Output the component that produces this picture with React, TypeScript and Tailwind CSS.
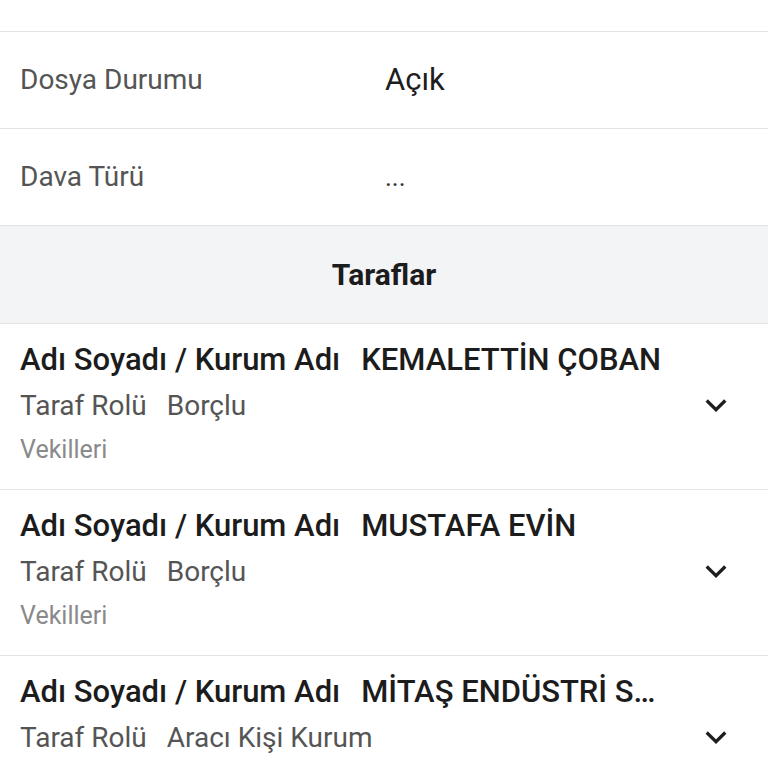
import React from "react";

function Chevron() {
  return (
    <svg width="30" height="30" viewBox="0 0 24 24" fill="none" stroke="#1e1e1e" strokeWidth="2.6" strokeLinecap="square">
      <path d="M5.5 8.5 L12 15 L18.5 8.5" />
    </svg>
  );
}

function InfoRow({ label, value, small }: { label: string; value: string; small?: boolean }) {
  return (
    <div className="flex h-[97px] items-center border-b border-[#e3e3e3] bg-white px-5">
      <div className="w-[365px] text-[28px] leading-[36px] text-[#555]">{label}</div>
      <div className={small ? "text-[26px] text-[#333]" : "text-[31px] leading-[36px] text-[#1e1e1e]"}>{value}</div>
    </div>
  );
}

function Party({ name, role, vekil = true }: { name: string; role: string; vekil?: boolean }) {
  return (
    <div className="flex h-[166px] items-start border-b border-[#e3e3e3] bg-white pl-5 pt-[18px]">
      <div className="flex w-[645px] flex-col">
        <div className="flex items-baseline whitespace-nowrap text-[31px] font-medium leading-[36px] text-[#1c1c1c]">
          <span className="shrink-0">Adı Soyadı / Kurum Adı</span>
          <span className="ml-[21px] min-w-0 truncate">{name}</span>
        </div>
        <div className="mt-[10px] flex items-baseline text-[28px] leading-[36px] text-[#555]">
          <span>Taraf Rolü</span>
          <span className="ml-[20px]">{role}</span>
        </div>
        {vekil && <div className="mt-[11px] text-[25px] leading-[30px] text-[#8a8a8a]">Vekilleri</div>}
      </div>
      <div className="ml-[36px] mt-[49px]">
        <Chevron />
      </div>
    </div>
  );
}

export default function App() {
  return (
    <div className="h-[768px] w-[768px] overflow-hidden bg-white" style={{ fontFamily: "Roboto, 'Noto Sans', sans-serif" }}>
      <div className="h-[32px] border-b border-[#e3e3e3] bg-white" />
      <InfoRow label="Dosya Durumu" value="Açık" />
      <InfoRow label="Dava Türü" value="..." small />
      <div className="flex h-[98px] items-center justify-center border-b border-[#e3e3e3] bg-[#f3f4f6] text-[30px] font-bold text-[#1c1c1c]">
        Taraflar
      </div>
      <Party name="KEMALETTİN ÇOBAN" role="Borçlu" />
      <Party name="MUSTAFA EVİN" role="Borçlu" />
      <Party name="MİTAŞ ENDÜSTRİ SANAYİ VE TİCARET" role="Aracı Kişi Kurum" />
    </div>
  );
}
